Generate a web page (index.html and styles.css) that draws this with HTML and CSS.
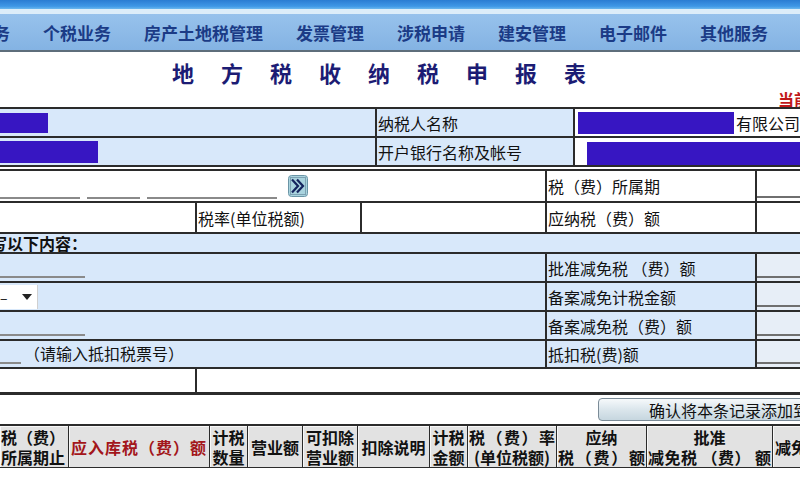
FILE: index.html
```html
<!DOCTYPE html>
<html lang="zh-CN">
<head>
    <meta charset="UTF-8">
    <meta name="viewport" content="width=device-width, initial-scale=1.0">
    <title>地方税收纳税申报表</title>
    <link rel="stylesheet" href="styles.css">
</head>
<body>
    <div class="page">
        <div class="topband"></div>
        <div class="strip"></div>
        <div class="nav">
            <span class="cut">务</span>
            <span>个税业务</span>
            <span>房产土地税管理</span>
            <span>发票管理</span>
            <span>涉税申请</span>
            <span>建安管理</span>
            <span>电子邮件</span>
            <span>其他服务</span>
        </div>

        <div class="head">
            <div class="title">地方税收纳税申报表</div>
            <div class="status">当前所属期</div>
        </div>

        <div class="info">
            <div class="cell blue"><span class="mask m1"></span></div>
            <div class="cell blue label">纳税人名称</div>
            <div class="cell white"><span class="mask m3"></span>有限公司</div>
            <div class="cell blue"><span class="mask m2"></span></div>
            <div class="cell blue label">开户银行名称及帐号</div>
            <div class="cell white bottom"><span class="mask m4"></span></div>
        </div>

        <div class="form">
            <div class="cell white span3 inputs">
                <span class="field" style="width: 80px"></span>
                <span class="field" style="width: 53px"></span>
                <span class="field" style="width: 130px"></span>
                <span class="pick">
                    <svg width="20" height="22" viewBox="0 0 20 22">
                        <rect x="0.5" y="0.5" width="19" height="21" rx="3" fill="#a9d3de" stroke="#6b95a6"/>
                        <rect x="2.5" y="2.5" width="15" height="17" fill="none" stroke="#4f6f86" stroke-dasharray="1 1"/>
                        <path d="M4 4.5 L10 11 L4 17.5 M9 4.5 L15 11 L9 17.5" fill="none" stroke="#15245e" stroke-width="2.2"/>
                    </svg>
                </span>
            </div>
            <div class="cell white label">税（费）所属期</div>
            <div class="cell white value line"></div>

            <div class="cell white"></div>
            <div class="cell white label">税率(单位税额)</div>
            <div class="cell white"></div>
            <div class="cell white label">应纳税（费）额</div>
            <div class="cell white value"></div>

            <div class="cell blue all strong"><span class="cut2">写以下内容：</span></div>

            <div class="cell blue span3 under"><span class="field" style="width: 85px"></span></div>
            <div class="cell blue label">批准减免税 （费）额</div>
            <div class="cell pale value line"></div>

            <div class="cell blue span3">
                <span class="select"><span class="dash">–</span><span class="arrow"></span></span>
            </div>
            <div class="cell blue label">备案减免计税金额</div>
            <div class="cell pale value line"></div>

            <div class="cell blue span3 under"><span class="field" style="width: 85px"></span></div>
            <div class="cell blue label">备案减免税（费）额</div>
            <div class="cell pale value line"></div>

            <div class="cell blue span3 under">
                <span class="field" style="width: 21px"></span>
                <span class="hint">（请输入抵扣税票号）</span>
            </div>
            <div class="cell blue label">抵扣税(费)额</div>
            <div class="cell pale value line"></div>

            <div class="cell white"></div>
            <div class="cell white rest"></div>
        </div>

        <div class="actions">
            <button class="add">确认将本条记录添加到列表</button>
        </div>

        <div class="grid-head">
            <div class="th right"><span>税（费）</span><span>所属期止</span></div>
            <div class="th red">应入库税（费）额</div>
            <div class="th"><span>计税</span><span>数量</span></div>
            <div class="th">营业额</div>
            <div class="th"><span>可扣除</span><span>营业额</span></div>
            <div class="th">扣除说明</div>
            <div class="th"><span>计税</span><span>金额</span></div>
            <div class="th"><span class="wide">税（费）率</span><span>(单位税额)</span></div>
            <div class="th"><span>应纳</span><span class="wide">税（费）额</span></div>
            <div class="th"><span>批准</span><span class="wide">减免税 （费） 额</span></div>
            <div class="th left">减免税（费）额</div>
        </div>
    </div>
</body>
</html>
```

FILE: styles.css
```css
* {
    margin: 0;
    padding: 0;
    box-sizing: border-box;
}

body {
    background: #fff;
    font-family: "Noto Sans CJK SC", "Liberation Sans", sans-serif;
    font-size: 16px;
    color: #111;
}

.page {
    width: 800px;
    height: 480px;
    overflow: hidden;
}

.topband {
    height: 9px;
    background: linear-gradient(#2a7cd2, #3f97e6 70%, #6cb8ee);
}

.strip {
    height: 5px;
    background: #dcedf9;
}

.nav {
    height: 38px;
    display: flex;
    align-items: center;
    gap: 33px;
    background: linear-gradient(#97c2ec, #84b3e3);
    border-bottom: 2px solid #5e6e7b;
    font-size: 17px;
    font-weight: 700;
    color: #1b3b86;
    white-space: nowrap;
}

.nav .cut {
    margin-left: -7px;
}

.head {
    height: 55px;
    padding-top: 7px;
    overflow: hidden;
}

.title {
    padding-left: 172px;
    font-size: 22px;
    line-height: 26px;
    font-weight: 700;
    letter-spacing: 27px;
    white-space: nowrap;
    color: #1c1c74;
}

.status {
    margin-top: 6px;
    padding-left: 778px;
    white-space: nowrap;
    font-weight: 700;
    line-height: 16px;
    color: #c0181a;
}

.info {
    display: grid;
    grid-template-columns: 375px 196px 1fr;
    grid-auto-rows: 27px;
    gap: 2px;
    padding: 2px 0;
    background: #2b2b2b;
}

.cell {
    display: flex;
    align-items: center;
    white-space: nowrap;
    overflow: hidden;
}

.blue {
    background: #d8e8fa;
}

.white {
    background: #fff;
}

.pale {
    background: #e7eef7;
}

.label {
    padding-left: 1px;
}

.mask {
    display: inline-block;
    background: #3716c2;
}

.m1 {
    width: 48px;
    height: 20px;
}

.m2 {
    width: 98px;
    height: 22px;
}

.m3 {
    width: 157px;
    height: 22px;
    margin-left: 3px;
    margin-right: 2px;
}

.m4 {
    width: 240px;
    height: 23px;
    margin-left: 12px;
    align-self: flex-end;
}

.form {
    margin-top: 2px;
    display: grid;
    grid-template-columns: 195px 163px 183px 208px 1fr;
    grid-template-rows: 30px 29px 18px 27px 27px 27px 26px 23px;
    gap: 2px;
    padding: 2px 0 3px;
    background: #2b2b2b;
}

.span3 {
    grid-column: span 3;
}

.all {
    grid-column: span 5;
}

.rest {
    grid-column: span 4;
}

.strong {
    font-weight: 700;
    line-height: 18px;
}

.cut2 {
    margin-left: -9px;
}

.inputs {
    align-items: flex-end;
    gap: 7px;
    padding-bottom: 2px;
}

.field {
    display: inline-block;
    height: 2px;
    background: #8a8a8a;
}

.pick {
    display: flex;
    margin-left: 4px;
    margin-bottom: 2px;
}

.under {
    align-items: flex-end;
    padding-bottom: 3px;
}

.hint {
    align-self: center;
    margin-left: 3px;
    line-height: 20px;
}

.value.line {
    align-items: flex-end;
    padding: 0 0 3px 0;
}

.value.line::after {
    content: "";
    display: block;
    width: 100%;
    height: 2px;
    background: #6f6f6f;
}

.select {
    display: flex;
    align-items: center;
    width: 38px;
    height: 24px;
    background: #fff;
    border-right: 1px solid #d0d0d0;
}

.dash {
    width: 22px;
    font-size: 14px;
}

.arrow {
    width: 0;
    height: 0;
    border-top: 6px solid #222;
    border-left: 5px solid transparent;
    border-right: 5px solid transparent;
}

.actions {
    margin-top: 3px;
    padding-left: 598px;
    display: flex;
    overflow: hidden;
}

.add {
    flex: none;
    width: 260px;
    height: 23px;
    padding-left: 50px;
    text-align: left;
    font-family: inherit;
    font-size: 16px;
    line-height: 20px;
    color: #111;
    white-space: nowrap;
    border: 1px solid #7b8b97;
    border-radius: 4px;
    background: linear-gradient(#f6f9fb, #dbe6ec 50%, #c6d6df);
}

.grid-head {
    margin-top: 3px;
    display: grid;
    grid-template-columns: 68px 140px 37px 54px 54px 71px 37px 88px 89px 125px 1fr;
    grid-auto-rows: 41px;
    gap: 1px;
    border-top: 2px solid #2b2b2b;
    padding-bottom: 1px;
    background: #2b2b2b;
}

.th {
    display: flex;
    flex-direction: column;
    justify-content: center;
    align-items: center;
    background: #e2e2e2;
    box-shadow: inset 1px 1px 0 #f7f7f7;
    font-weight: 700;
    line-height: 20px;
    white-space: nowrap;
    overflow: hidden;
}

.th .wide {
    align-self: stretch;
    text-align: justify;
    text-align-last: justify;
    padding: 0 1px;
}

.th.right {
    align-items: flex-end;
    padding-right: 3px;
}

.th.left {
    align-items: flex-start;
    padding-left: 2px;
}

.th.red {
    color: #a3161b;
    letter-spacing: 1px;
}
```
